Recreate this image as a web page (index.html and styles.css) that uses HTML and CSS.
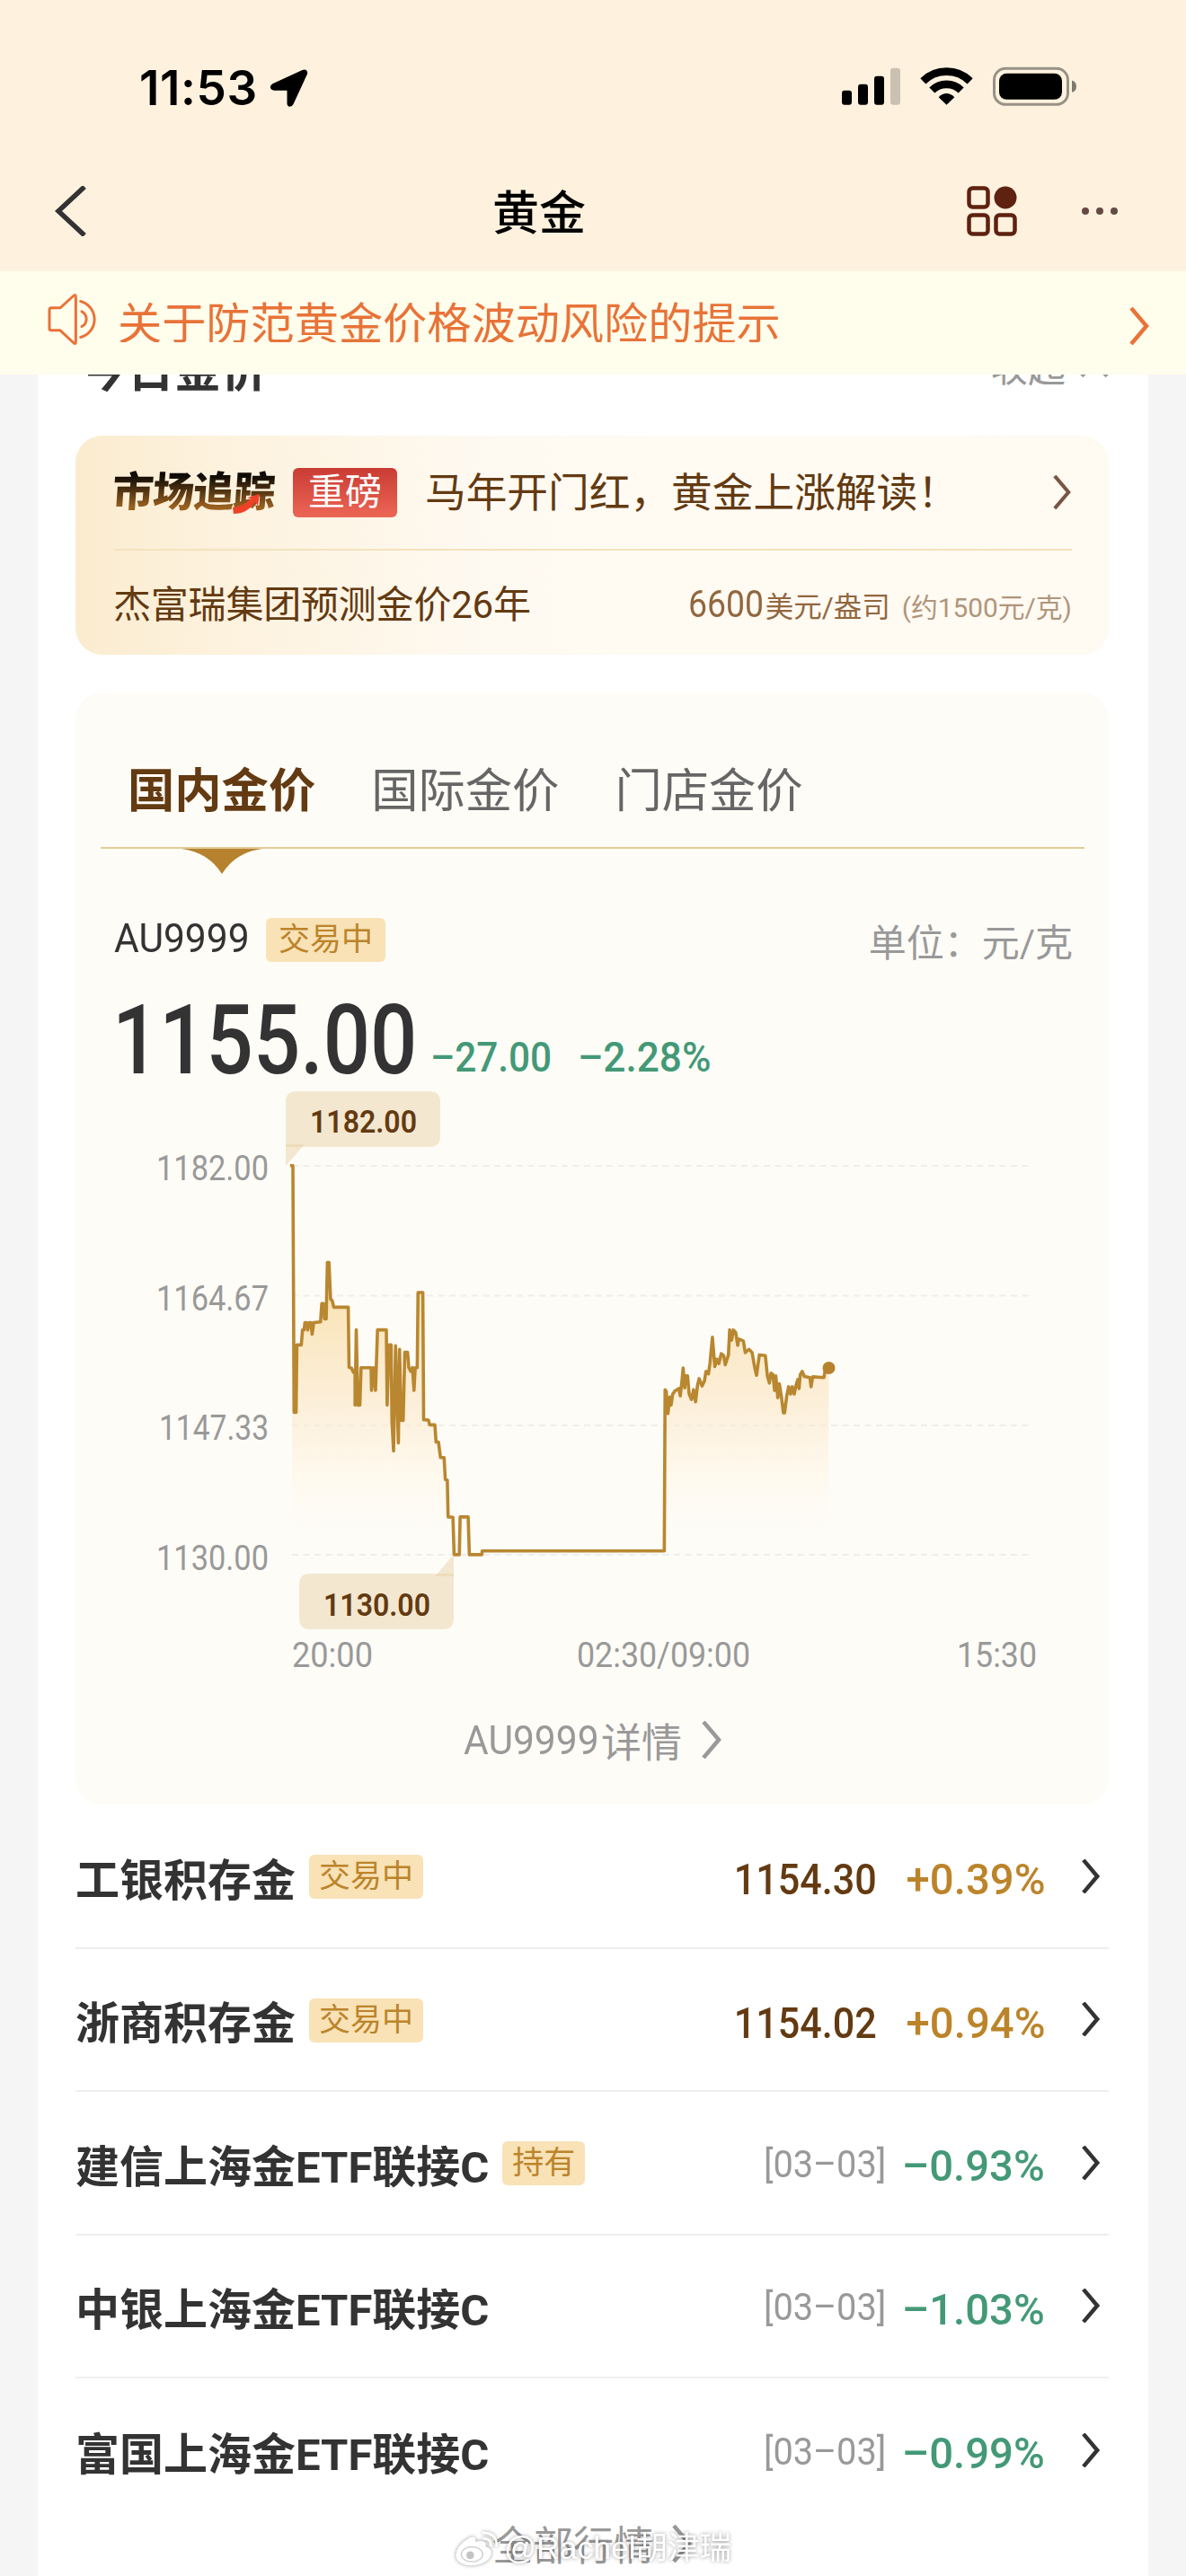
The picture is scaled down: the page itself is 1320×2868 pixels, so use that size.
FILE: index.html
```html
<!DOCTYPE html>
<html lang="zh-CN">
<head>
    <meta charset="UTF-8">
    <meta name="viewport" content="width=device-width, initial-scale=1.0">
    <title>黄金</title>
    <link rel="stylesheet" href="styles.css">
</head>
<body>
    <div class="header">
        <div class="status-bar">
            <div class="clock">
                <span class="time">11:53</span>
                <svg class="location" viewBox="776 48 134 132">
                    <path d="M905 66L858 168Q854 176 846 176Q837 175 837 164V122H794Q782 121 781 111Q781 103 790 99L888 54Q896 51 901 54Q906 58 905 66Z"/>
                </svg>
            </div>
            <svg class="signals" viewBox="105 100 795 140">
                <rect x="111" y="183" width="33" height="48" rx="9"/>
                <rect x="165" y="162" width="33" height="69" rx="9"/>
                <rect x="219" y="135" width="33" height="96" rx="9"/>
                <rect x="273" y="108" width="33" height="123" rx="9" opacity=".2"/>
                <g fill="none" stroke="#000" stroke-width="26">
                    <path d="M382 151.500A112.500 112.500 0 0 1 539 151.500"/>
                    <path d="M412 182A69 69 0 0 1 509 182"/>
                </g>
                <path d="M460.500 231L434 205Q460 180 487 205Z"/>
                <rect x="619.500" y="109.500" width="246" height="120" rx="38" fill="none" stroke="#000" stroke-width="9" opacity=".4"/>
                <rect x="636" y="126" width="210" height="87" rx="25"/>
                <path d="M879 149Q894 154 894 169Q894 184 879 189Z" opacity=".5"/>
            </svg>
        </div>
        <div class="nav">
            <svg class="back" viewBox="0 0 36 56"><path d="M34 1L5 28L34 55"/></svg>
            <h1>黄金</h1>
            <div class="nav-actions">
                <svg class="apps" viewBox="0 0 56 56">
                    <rect x="2.500" y="2.500" width="21" height="21" rx="4"/>
                    <circle cx="43" cy="13" r="12.500"/>
                    <rect x="2.500" y="32.500" width="21" height="21" rx="4"/>
                    <rect x="32.500" y="32.500" width="21" height="21" rx="4"/>
                </svg>
                <svg class="more" viewBox="0 0 40 8">
                    <circle cx="4" cy="4" r="4"/><circle cx="20" cy="4" r="4"/><circle cx="36" cy="4" r="4"/>
                </svg>
            </div>
        </div>
    </div>

    <div class="notice">
        <svg class="speaker" viewBox="36 798 174 176">
            <path d="M48 848H78L122 808Q130 800 130 812V960Q130 972 122 964L78 923H48Q42 923 42 917V854Q42 848 48 848Z"/>
            <path d="M146 826A62 62 0 0 1 146 946M150 860A28 28 0 0 1 150 910"/>
        </svg>
        <span class="notice-text">关于防范黄金价格波动风险的提示</span>
        <svg class="arrow" viewBox="0 0 22 42"><path d="M2 1L19 21L2 41"/></svg>
    </div>

    <div class="page">
        <div class="section-title">
            <h2>今日金价</h2>
            <span class="fold">收起<svg class="fold-icon" viewBox="0 0 32 20"><path d="M2 18L16 3L30 18"/></svg></span>
        </div>

        <div class="banner">
            <div class="banner-top">
                <div class="logo">
                    <span class="logo-text">市场追踪</span>
                    <svg class="logo-arrow" viewBox="0 0 31 22"><path d="M0 15Q12 14 20 5L16 4L30 0L28 13L25 9Q16 22 1 22Z"/></svg>
                </div>
                <span class="hot">重磅</span>
                <span class="headline">马年开门红，黄金上涨解读！</span>
                <svg class="arrow" viewBox="0 0 22 42"><path d="M2 1L19 21L2 41"/></svg>
            </div>
            <div class="banner-bottom">
                <span class="forecast">杰富瑞集团预测金价26年</span>
                <span class="target"><span class="num target-num">6600</span>美元/盎司</span>
                <span class="approx">(约1500元/克)</span>
            </div>
        </div>

        <div class="quote">
            <div class="tabs">
                <span class="tab active">国内金价<svg class="tab-mark" viewBox="0 0 90 28"><path d="M0 0H90Q60 4 45 28Q30 4 0 0Z"/></svg></span>
                <span class="tab">国际金价</span>
                <span class="tab">门店金价</span>
            </div>
            <div class="quote-head">
                <span class="num symbol">AU9999</span>
                <span class="tag">交易中</span>
                <span class="unit">单位：元/克</span>
            </div>
            <div class="quote-price">
                <span class="num price">1155.00</span>
                <span class="num change">–27.00</span>
                <span class="num change change-rate">–2.28%</span>
            </div>
            <svg class="chart" viewBox="127 1210 1066 660">
                <defs>
                    <linearGradient id="area" gradientUnits="userSpaceOnUse" x1="0" y1="560" x2="0" y2="1280">
                        <stop offset="0" stop-color="#f8dfa8" stop-opacity=".9"/>
                        <stop offset=".45" stop-color="#fbe6c4" stop-opacity=".6"/>
                        <stop offset=".75" stop-color="#fff6e6" stop-opacity=".5"/>
                        <stop offset="1" stop-color="#fffdf9" stop-opacity="0"/>
                    </linearGradient>
                </defs>
                <g class="grid">
                    <path d="M325 1299H1148M325 1443.500H1148M325 1588H1148M325 1732H1148"/>
                </g>
                <g class="axis">
                    <text x="174" y="1315" textLength="125" lengthAdjust="spacingAndGlyphs">1182.00</text>
                    <text x="174" y="1460" textLength="125" lengthAdjust="spacingAndGlyphs">1164.67</text>
                    <text x="177" y="1604" textLength="122" lengthAdjust="spacingAndGlyphs">1147.33</text>
                    <text x="174" y="1749" textLength="125" lengthAdjust="spacingAndGlyphs">1130.00</text>
                    <text x="325" y="1857" textLength="90" lengthAdjust="spacingAndGlyphs">20:00</text>
                    <text x="642" y="1857" textLength="193" lengthAdjust="spacingAndGlyphs">02:30/09:00</text>
                    <text x="1065" y="1857" textLength="89" lengthAdjust="spacingAndGlyphs">15:30</text>
                </g>
                <g transform="translate(280 1200) scale(.4464 .4082)">
                    <path fill="url(#area)" d="M101 1303V242H103L106 915H111L113 731H124L127 690H131L133 670H172L175 618L182 660H186L189 506H193L197 606L205 628H241L243 792L258 806V895L261 690L265 895H270L273 793H298L299 855L304 793L309 855L314 690H336L338 895L343 731H348L354 1020L359 733L366 998L369 743L373 937H378L382 751H389L392 793L397 803L405 855L408 793H413L415 588H427L429 935L444 949H457L471 1038H480L490 1200H502L505 1303Z"/>
                    <path fill="url(#area)" d="M1029 1303L1031 853L1038 918L1043 873L1065 850L1069 870L1076 794L1080 848L1083 815H1087L1097 880L1107 886L1116 823L1129 830L1143 780L1149 710L1155 790L1171 755L1181 785L1192 690H1201L1212 732L1226 720L1231 752L1248 752L1259 814L1266 758H1281L1286 815L1300 812L1312 875L1316 837L1326 916H1329L1339 845L1353 865L1368 812L1373 803L1395 820H1427L1431 795L1439 793V1303Z"/>
                    <path class="line" d="M96 242H103L106 915H111L113 731H124L127 690H131L133 670H137L140 690L144 670H148L151 702L155 670L172 668L175 618H179L182 660H186L189 506H193L197 606L201 610L205 628H241L243 792L249 794L254 806H258V895L261 690L265 895H270L273 793H298L299 855L304 793L309 855L314 690H336L338 895L343 731H348L350 940L354 1020L359 733L366 998L369 743L373 937H378L382 751H389L392 793L397 803L401 793L405 855L408 793H413L415 588H427L429 935L441 936L444 949H457L460 996H466L471 1038H480L483 1098L488 1100L490 1200L502 1201L505 1303H518L520 1200H540L543 1303H574L575 1293H1029L1031 853L1034 858L1038 918L1043 873L1046 895L1050 865L1056 856L1065 850L1069 870L1073 830L1076 794L1080 848L1083 815H1087L1091 865L1097 880L1102 853L1107 886L1112 840L1116 823L1123 843L1129 830L1133 803L1139 810L1143 780L1149 710L1155 790L1160 770L1165 782L1171 755L1177 760L1181 785L1189 758L1192 690L1197 718L1201 690L1207 697L1212 732L1215 715L1226 720L1231 752L1240 743L1248 752L1254 790L1259 814L1266 758L1281 760L1286 815L1291 835L1295 808L1300 812L1304 855L1307 815L1312 875L1316 837L1321 872L1326 916H1329L1334 872L1339 845L1344 865L1348 845L1353 865L1357 843L1362 825L1365 850L1368 812L1373 803L1378 817L1392 820L1395 845L1399 818L1427 820L1431 795L1439 793"/>
                </g>
                <circle cx="922.500" cy="1524" r="7" fill="#b7822d"/>
                <!-- 最高价 / 最低价 -->
                <g class="bubble">
                    <path d="M330 1216H478Q490 1216 490 1228V1266Q490 1278 478 1278H318V1228Q318 1216 330 1216Z"/>
                    <path d="M318 1275H339L318 1299Z"/>
                    <text x="345" y="1262" textLength="119" lengthAdjust="spacingAndGlyphs">1182.00</text>
                    <path d="M345 1753H505V1803Q505 1815 493 1815H345Q333 1815 333 1803V1765Q333 1753 345 1753Z"/>
                    <path d="M505 1756H484L505 1732Z"/>
                    <text x="360" y="1800" textLength="119" lengthAdjust="spacingAndGlyphs">1130.00</text>
                </g>
            </svg>
            <div class="detail">
                <span class="num detail-symbol">AU9999</span>详情
                <svg class="arrow" viewBox="0 0 22 42"><path d="M2 1L19 21L2 41"/></svg>
            </div>
        </div>

        <div class="list">
            <div class="row">
                <span class="name">工银积存金</span><span class="tag">交易中</span>
                <span class="num value">1154.30</span>
                <span class="num percent up">+0.39%</span>
                <svg class="arrow" viewBox="0 0 22 42"><path d="M2 1L19 21L2 41"/></svg>
            </div>
            <div class="row">
                <span class="name">浙商积存金</span><span class="tag">交易中</span>
                <span class="num value">1154.02</span>
                <span class="num percent up">+0.94%</span>
                <svg class="arrow" viewBox="0 0 22 42"><path d="M2 1L19 21L2 41"/></svg>
            </div>
            <div class="row">
                <span class="name">建信上海金ETF联接C</span><span class="tag">持有</span>
                <span class="num date">[03–03]</span>
                <span class="num percent down">–0.93%</span>
                <svg class="arrow" viewBox="0 0 22 42"><path d="M2 1L19 21L2 41"/></svg>
            </div>
            <div class="row">
                <span class="name">中银上海金ETF联接C</span>
                <span class="num date">[03–03]</span>
                <span class="num percent down">–1.03%</span>
                <svg class="arrow" viewBox="0 0 22 42"><path d="M2 1L19 21L2 41"/></svg>
            </div>
            <div class="row">
                <span class="name">富国上海金ETF联接C</span>
                <span class="num date">[03–03]</span>
                <span class="num percent down">–0.99%</span>
                <svg class="arrow" viewBox="0 0 22 42"><path d="M2 1L19 21L2 41"/></svg>
            </div>
        </div>
        <div class="all">
            全部行情
            <svg class="arrow" viewBox="0 0 22 42"><path d="M2 1L19 21L2 41"/></svg>
        </div>
    </div>

    <div class="watermark">
        <svg class="weibo" viewBox="80 134 150 122">
            <path d="M130 158Q152 150 150 172Q188 162 184 188Q206 196 202 214Q192 248 138 251Q88 250 84 218Q86 184 130 158Z" fill="#fff"/>
            <ellipse cx="138" cy="214" rx="36" ry="25" fill="none" stroke="#ccc" stroke-width="4"/>
            <circle cx="132" cy="217" r="13" fill="#c4c4c4"/>
            <path d="M176 142Q222 144 220 186M178 162Q202 162 201 184" fill="none" stroke="#fff" stroke-width="8" stroke-linecap="round"/>
        </svg>
        <span>@Rachel胡津瑞</span>
    </div>
</body>
</html>
```
FILE: styles.css
```css
* {
    box-sizing: border-box;
}
body {
    margin: 0;
    position: relative;
    width: 1320px;
    height: 2868px;
    overflow: hidden;
    background-color: #f5f5f5;
    color: #333;
    font-family: Roboto, "Noto Sans CJK SC", sans-serif;
}
svg {
    display: block;
    flex: none;
}
h1, h2 {
    margin: 0;
}
/* 数字略微压窄 */
.num {
    display: block;
    flex: none;
    font-family: Roboto, sans-serif;
    white-space: nowrap;
    transform: scaleX(0.89);
    transform-origin: left center;
}
.arrow {
    width: 22px;
    height: 42px;
    fill: none;
    stroke: currentColor;
    stroke-width: 4.5;
}

/* 顶部 */
.header {
    height: 302px;
    background-color: #fef2df;
}
.status-bar {
    display: flex;
    justify-content: space-between;
    height: 170px;
    padding: 73px 120px 0 155px;
}
.clock {
    display: flex;
    height: 50px;
    align-items: center;
    gap: 12px;
}
.time {
    width: 132px;
    color: #000;
    font-family: Inter, sans-serif;
    font-size: 53px;
    font-weight: 600;
    letter-spacing: 0.6px;
}
.location {
    width: 45px;
    height: 44px;
}
.signals {
    width: 265px;
    height: 47px;
}
.nav {
    display: grid;
    grid-template-columns: 488px 104px 1fr;
    align-items: center;
    height: 130px;
    padding: 0 76px 0 60px;
}
.back {
    width: 36px;
    height: 56px;
    fill: none;
    stroke: #333;
    stroke-width: 5.5;
}
.nav h1 {
    margin-top: -3px;
    color: #000;
    font-family: "Noto Sans CJK SC", sans-serif;
    font-size: 52px;
    font-weight: 500;
    line-height: 80px;
}
.nav-actions {
    display: flex;
    align-items: center;
    justify-content: flex-end;
    gap: 72px;
}
.apps {
    width: 56px;
    height: 56px;
    fill: none;
    stroke: #5f2210;
    stroke-width: 4.5;
}
.apps circle {
    fill: #5f2210;
    stroke: none;
}
.more {
    width: 40px;
    height: 8px;
    fill: #644a44;
}
.notice {
    display: flex;
    align-items: center;
    height: 115px;
    padding: 0 41px 0 53px;
    background-color: #fffdec;
    color: #e87338;
}
.speaker {
    width: 58px;
    height: 59px;
    margin-top: -8px;
    fill: none;
    stroke: #e87338;
    stroke-width: 9;
    stroke-linecap: round;
}
.notice-text {
    flex: 1;
    align-self: flex-start;
    height: 55px;
    margin: 24px 0 0 20px;
    overflow: hidden;
    font-size: 49.2px;
    line-height: 70px;
}
.notice .arrow {
    margin-top: 6px;
}

/* 内容 */
.page {
    height: 2451px;
    margin: 0 42px;
    padding: 0 44px 0 42px;
    overflow: hidden;
    background-color: #fff;
}
.section-title {
    display: flex;
    justify-content: space-between;
    height: 68px;
}
.section-title h2 {
    margin-top: -41px;
    padding-left: 6px;
    font-size: 52px;
    font-weight: 700;
    line-height: 76px;
}
.fold {
    display: flex;
    gap: 16px;
    margin: -36px 0 0 0;
    color: #999;
    font-size: 42px;
    line-height: 60px;
}
.fold-icon {
    width: 32px;
    height: 20px;
    margin-top: 20px;
    fill: none;
    stroke: #999;
    stroke-width: 4;
}
.banner {
    height: 244px;
    padding: 0 41px 0 43px;
    border-radius: 30px;
    background: linear-gradient(90deg, #fbecd0 0%, #fdf2de 15%, #fef9f0 38%, #fffbf3 60%, #fffaf2 100%);
    color: #633a11;
}
.banner-top {
    display: flex;
    align-items: center;
    height: 128px;
    border-bottom: 2px solid #f3e2be;
}
.logo {
    position: relative;
    width: 180px;
}
.logo-text {
    display: block;
    margin-left: -2px;
    background: linear-gradient(#100b06 20%, #9a6120 78%);
    -webkit-background-clip: text;
    background-clip: text;
    color: transparent;
    font-size: 46px;
    font-weight: 900;
    letter-spacing: -1px;
    line-height: 60px;
    transform: skewX(-4deg);
}
.logo-arrow {
    position: absolute;
    left: 132px;
    top: 32px;
    width: 31px;
    height: 22px;
    fill: #ee4127;
}
.hot {
    width: 116px;
    height: 55px;
    margin-left: 19px;
    border-radius: 6px;
    background: linear-gradient(#c93c34, #ec6655);
    color: #fff;
    font-size: 41px;
    line-height: 54px;
    text-align: center;
}
.headline {
    flex: 1;
    margin: 3px 0 0 31px;
    font-size: 45.7px;
    line-height: 60px;
}
.banner .arrow {
    height: 38px;
    color: #7a5544;
}
.banner-bottom {
    display: flex;
    align-items: center;
    height: 114px;
}
.forecast {
    flex: 1;
    margin: -2px 0 0 -1px;
    font-size: 42px;
    letter-spacing: -0.2px;
}
.target {
    display: flex;
    align-items: baseline;
    padding-top: 4px;
    color: #92673f;
    font-size: 31.5px;
}
.target-num {
    width: 86px;
    font-size: 42px;
}
.approx {
    margin-left: 13px;
    padding-top: 8px;
    color: #b0957b;
    font-size: 29.8px;
}

/* 行情卡片 */
.quote {
    height: 1239px;
    margin-top: 42px;
    padding: 48px 27px 0 28px;
    border-radius: 30px;
    background-color: #fefcf7;
}
.tabs {
    display: flex;
    gap: 62px;
    height: 126px;
    padding-left: 30px;
    border-bottom: 2px solid #e3cb98;
    font-size: 52.3px;
    line-height: 124px;
}
.tab {
    position: relative;
    color: #666;
}
.tab.active {
    color: #633a11;
    font-weight: 700;
}
.tab-mark {
    position: absolute;
    left: 60px;
    top: 126px;
    width: 90px;
    height: 28px;
    fill: #b7822d;
}
.quote-head {
    display: flex;
    align-items: center;
    height: 50px;
    margin-top: 76px;
    padding: 0 13px 0 15px;
}
.symbol {
    width: 169px;
    margin-top: -4px;
    font-size: 45px;
    transform: scaleX(0.945);
}
.tag {
    height: 49px;
    padding: 0 11px;
    border-radius: 6px;
    background-color: #f8e2b6;
    color: #bc842a;
    font-size: 35px;
    line-height: 50px;
}
.quote-head .tag {
    padding: 0 14px;
}
.unit {
    margin-left: auto;
    color: #999;
    font-size: 42px;
}
.quote-price {
    display: flex;
    align-items: baseline;
    height: 138px;
    padding-left: 13px;
    line-height: 138px;
}
.price {
    width: 354px;
    padding-top: 19px;
    font-size: 107px;
    font-weight: 500;
    transform: scaleX(0.86);
}
.change {
    width: 164px;
    color: #439977;
    font-size: 47px;
    font-weight: 500;
    transform: translateY(-2px) scaleX(0.9);
}
.change-rate {
    transform: translateY(-2px) scaleX(0.94);
}
.chart {
    width: 1066px;
    height: 660px;
    margin: 0 15px;
}
.grid path {
    stroke: #f0eeea;
    stroke-width: 2;
    stroke-dasharray: 7 5.5;
}
.axis text {
    fill: #999;
    font-family: Roboto, sans-serif;
    font-size: 39px;
}
.line {
    fill: none;
    stroke: #b98730;
    stroke-width: 3.6;
    stroke-linejoin: round;
    vector-effect: non-scaling-stroke;
}
.bubble path {
    fill: #e6cf9f;
    fill-opacity: .45;
}
.bubble text {
    fill: #633a11;
    font-family: Roboto, sans-serif;
    font-size: 34.5px;
    font-weight: 600;
}
.detail {
    display: flex;
    align-items: center;
    justify-content: center;
    height: 70px;
    margin-top: 33px;
    color: #999;
    font-size: 45px;
}
.detail-symbol {
    width: 153px;
    transform: scaleX(0.945);
}
.detail .arrow {
    margin-left: 22px;
}

/* 产品列表 */
.row {
    display: flex;
    align-items: center;
    height: 159.5px;
    border-bottom: 2px solid #eee;
}
.row:last-child {
    border-bottom: none;
}
.name {
    padding-top: 1px;
    font-size: 49px;
    font-weight: 700;
}
.row .tag {
    margin: 2px 0 0 15px;
}
.value, .percent, .date {
    padding-top: 8px;
    transform-origin: right center;
}
.value, .date {
    margin-left: auto;
}
.value {
    margin-right: 15px;
    color: #633a11;
    font-size: 49px;
    font-weight: 500;
    transform: scaleX(0.88);
}
.date {
    padding-top: 3px;
    color: #999;
    font-size: 42px;
    transform: scaleX(0.945);
}
.percent {
    margin-left: 12px;
    font-size: 49px;
    font-weight: 500;
    transform: scaleX(0.965);
}
.up {
    color: #bc842a;
}
.down {
    color: #439977;
}
.row .arrow {
    height: 38px;
    margin: 0 9px 0 40px;
    stroke-width: 5;
}
.all {
    display: flex;
    align-items: center;
    justify-content: center;
    gap: 20px;
    height: 60px;
    margin-top: -6px;
    color: #999;
    font-size: 45px;
}
.watermark {
    position: absolute;
    left: 506px;
    top: 2813px;
    display: flex;
    align-items: center;
    gap: 5px;
    color: #fff;
    font-family: "Liberation Sans", "Noto Sans CJK SC", sans-serif;
    font-size: 35.5px;
    line-height: 48px;
    filter: drop-shadow(0 0 2px rgba(0, 0, 0, 0.4));
}
.weibo {
    width: 50px;
    height: 41px;
}
```
